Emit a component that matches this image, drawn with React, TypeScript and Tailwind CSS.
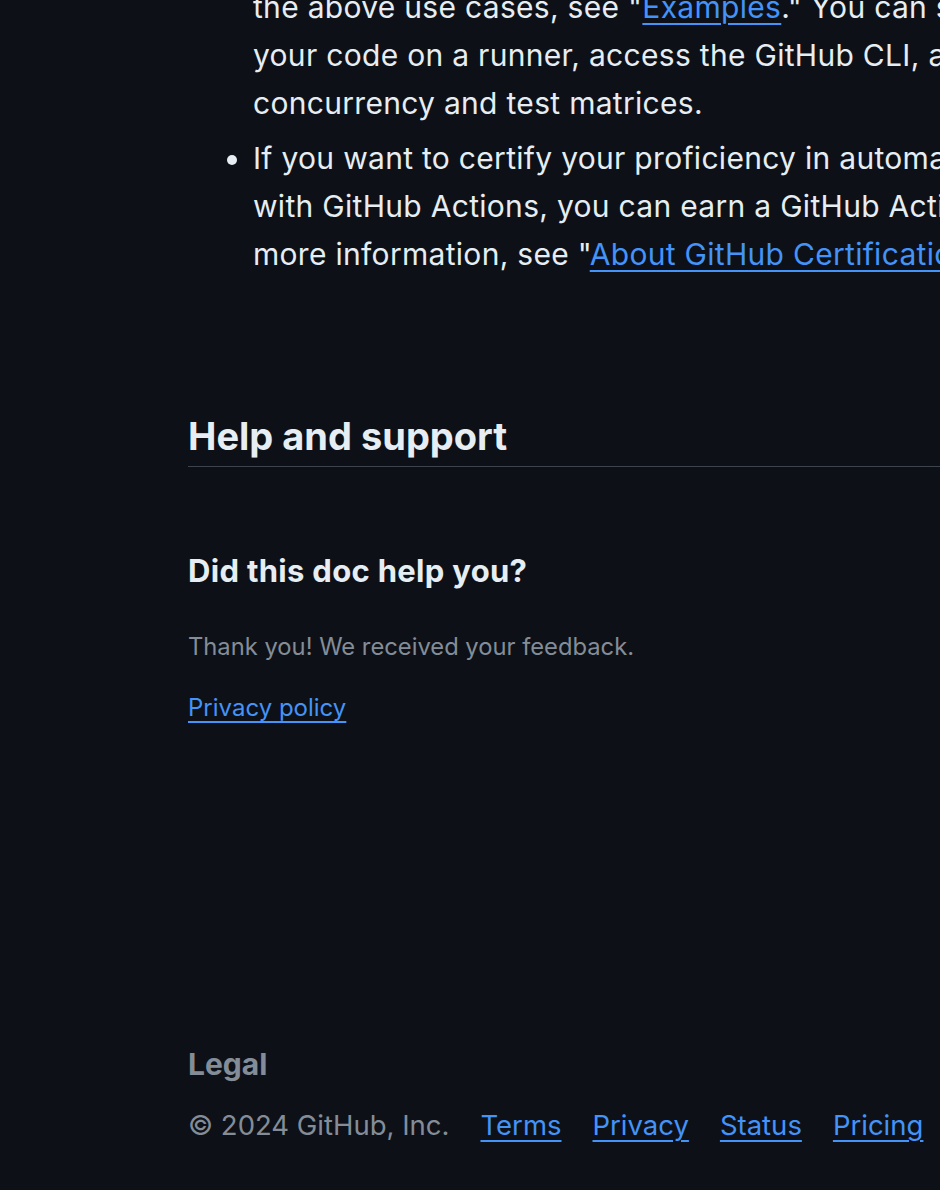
import React from "react";

const font = { fontFamily: "Inter, 'Noto Sans', sans-serif" };

const footerLinks = ["Terms", "Privacy", "Status", "Pricing"];

const Link = ({ children }: { children: React.ReactNode }) => (
  <a href="#" className="text-[#4493f8] underline underline-offset-[5px] decoration-[1.5px]">
    {children}
  </a>
);

const App = () => {
  return (
    <div
      className="w-[940px] h-[1190px] overflow-hidden bg-[#0d1117] text-[#e6edf3] antialiased"
      style={font}
    >
      <div className="w-[1300px] pl-[188px] -mt-[65px]">
        <ul className="list-disc pl-[65px] text-[30px] leading-[48px] tracking-[0.01em] whitespace-nowrap">
          <li>
            For examples that demonstrate more complex features of GitHub Actions, including many of
            <br />
            the above use cases, see "<Link>Examples</Link>." You can see detailed examples that explain how to test
            <br />
            your code on a runner, access the GitHub CLI, and use advanced features such as
            <br />
            concurrency and test matrices.
          </li>
          <li className="mt-[7px]">
            If you want to certify your proficiency in automating workflows and accelerating development
            <br />
            with GitHub Actions, you can earn a GitHub Actions certificate with GitHub Certifications. For
            <br />
            more information, see "<Link>About GitHub Certifications</Link>."
          </li>
        </ul>

        <h2 className="mt-[136px] pb-[7px] border-b border-[#3d444d] text-[38px] leading-[45px] font-bold">
          Help and support
        </h2>

        <h3 className="mt-[83px] text-[31px] leading-[42px] font-bold tracking-[0.01em]">
          Did this doc help you?
        </h3>
        <p className="mt-[37px] text-[23.75px] leading-[36px] text-[#848d97]">
          Thank you! We received your feedback.
        </p>
        <p className="mt-[25px] text-[24px] leading-[36px]">
          <Link>Privacy policy</Link>
        </p>

        <h2 className="mt-[319px] text-[30px] leading-[38px] font-bold text-[#848d97]">Legal</h2>
        <div className="mt-[21px] flex items-center gap-[31px] text-[27.5px] leading-[42px] text-[#848d97]">
          <span>© 2024 GitHub, Inc.</span>
          {footerLinks.map((l) => (
            <Link key={l}>{l}</Link>
          ))}
        </div>
      </div>
    </div>
  );
};

export default App;
